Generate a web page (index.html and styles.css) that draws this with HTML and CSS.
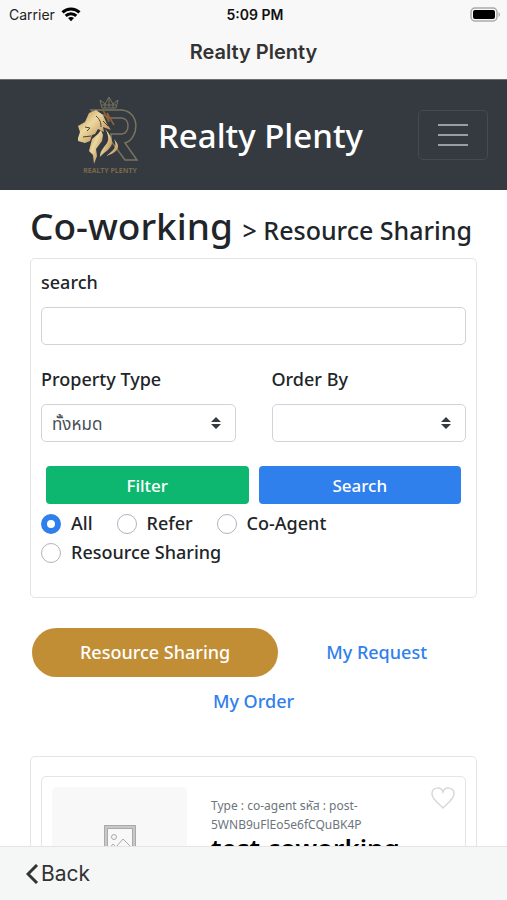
FILE: index.html
```html
<!DOCTYPE html>
<html lang="en">

<head>
    <meta charset="UTF-8">
    <meta name="viewport" content="width=device-width, initial-scale=1.0">
    <title>Realty Plenty</title>
    <link rel="stylesheet" href="styles.css">
</head>

<body>
    <header class="app-header">
        <div class="status-bar">
            <div class="carrier">
                <span>Carrier</span>
                <svg width="20" height="15" viewBox="0 0 20 15" fill="none" stroke="#000" stroke-width="3">
                    <path d="M1.5 5.4c4.8-4.6 12.2-4.6 17 0" />
                    <path d="M4.7 8.8c3-2.9 7.6-2.9 10.6 0" />
                    <path d="M10 14.2l-3-3.1c1.7-1.5 4.3-1.5 6 0z" fill="#000" stroke="none" />
                </svg>
            </div>
            <span class="clock">5:09 PM</span>
            <svg class="battery" width="31" height="15" viewBox="0 0 31 15">
                <rect x="1" y="1" width="26" height="13" rx="4" fill="#f8f8f8" stroke="#aaa" stroke-width="1.5" />
                <rect x="3" y="3" width="22" height="9" rx="2" fill="#000" />
                <path d="M28.5 5c2 1 2 4 0 5z" fill="#aaa" />
            </svg>
        </div>
        <div class="app-title">Realty Plenty</div>
    </header>

    <div class="page">
        <nav class="navbar">
            <a class="brand" href="#">
                <svg width="64" height="80" viewBox="0 0 64 80">
                    <defs>
                        <linearGradient id="gold" x1="0" y1="0" x2="1" y2="1">
                            <stop offset="0" stop-color="#b9894a" />
                            <stop offset=".4" stop-color="#ecd9a0" />
                            <stop offset="1" stop-color="#a8713a" />
                        </linearGradient>
                    </defs>
                    <g fill="none" stroke="#77745f">
                        <path d="M25 13l-2-8 5 4 4-7 4 7 5-4-2 8z" />
                        <path d="M25 10h14M32 3v9M28 9v4M36 9v4" />
                        <path d="M14 15h31c19 2 17 29 3 33l12 17H48L34 46V39h11c8-2 8-15 0-16H31l-4-3h-9z" stroke-width="1.5" />
                    </g>
                    <g fill="url(#gold)">
                        <path d="M1 43l2-6-2-6 7-4 4-9 7-3 7 5 4 9 4 6-8-3 1 5-6-3-3 5-3 1-2 6-5 2-7-2z" />
                        <path d="M15 44l6-5 3-4 2 5-1 6-6 8 1 7-3 8-1-9-4-4 2-8z" />
                        <path d="M28 34c5 8 4 13-1 18-3 4-4 6-4 10 4-5 10-7 12-13 1-5-3-11-7-15z" />
                        <path d="M37 44c4 8-1 12-8 17 8-2 15-7 11-13z" />
                    </g>
                    <path d="M8 32l5 1-3 3M19 21c4 3 5 7 5 11M6 42l8-1M26 26l5 5" fill="none" stroke="#4c4235" />
                    <path d="M26 15l6 12-2-9 7 12" fill="none" stroke="#8f6337" stroke-width="1.5" />
                    <text class="brand-caption" x="33" y="78" text-anchor="middle">REALTY PLENTY</text>
                </svg>
                <span>Realty Plenty</span>
            </a>
            <button class="menu-toggle" type="button" aria-label="Toggle navigation">
                <svg width="30" height="30" viewBox="0 0 30 30" stroke="#9b9da0" stroke-width="2">
                    <path d="M0 5h30M0 15h30M0 25h30" />
                </svg>
            </button>
        </nav>

        <main class="content">
            <h1>Co-working <small>&gt; Resource Sharing</small></h1>

            <form class="card search-card">
                <div class="field">
                    <label for="search">search</label>
                    <input class="control" type="text" id="search">
                </div>
                <div class="field-row">
                    <div class="field">
                        <label for="type">Property Type</label>
                        <div class="select-wrap">
                            <select class="control" id="type">
                                <option>ทั้งหมด</option>
                            </select>
                            <svg class="arrows" width="10" height="12" viewBox="0 0 10 12" fill="#343a40">
                                <path d="M5 0l5 5H0zM5 12L0 7h10z" />
                            </svg>
                        </div>
                    </div>
                    <div class="field">
                        <label for="order">Order By</label>
                        <div class="select-wrap">
                            <select class="control" id="order">
                                <option></option>
                            </select>
                            <svg class="arrows" width="10" height="12" viewBox="0 0 10 12" fill="#343a40">
                                <path d="M5 0l5 5H0zM5 12L0 7h10z" />
                            </svg>
                        </div>
                    </div>
                </div>
                <div class="buttons">
                    <button class="btn btn-filter" type="button">Filter</button>
                    <button class="btn btn-search" type="button">Search</button>
                </div>
                <div class="radios">
                    <label><input type="radio" name="kind" checked>All</label>
                    <label><input type="radio" name="kind">Refer</label>
                    <label><input type="radio" name="kind">Co-Agent</label>
                    <label><input type="radio" name="kind">Resource Sharing</label>
                </div>
            </form>

            <div class="tabs">
                <a class="tab active" href="#">Resource Sharing</a>
                <a class="tab" href="#">My Request</a>
                <a class="tab" href="#">My Order</a>
            </div>

            <section class="card list-card">
                <article class="card post">
                    <div class="thumb">
                        <svg width="32" height="32" viewBox="0 0 32 32" fill="none" stroke="#aaa">
                            <rect x="1.5" y="1.5" width="29" height="29" stroke="#c8c8c8" stroke-width="3" />
                            <rect x=".5" y=".5" width="31" height="31" />
                            <rect x="3.5" y="3.5" width="25" height="25" fill="#f8f8f8" />
                            <circle cx="10" cy="12" r="2.5" />
                            <path d="M4 25l5-6 3 3 7-8 9 9" />
                        </svg>
                    </div>
                    <div class="post-body">
                        <p>Type : co-agent รหัส : post-5WNB9uFlEo5e6fCQuBK4P</p>
                        <h2>test coworking</h2>
                    </div>
                    <button class="like" type="button" aria-label="Like">
                        <svg width="24" height="22" viewBox="0 0 24 22" fill="none" stroke="#d8d8d8" stroke-width="1.5">
                            <path d="M12 21C8 17 1 12 1 7c0-7 9-8 11-2 2-6 11-5 11 2 0 5-7 10-11 14z" />
                        </svg>
                    </button>
                </article>
            </section>
        </main>
    </div>

    <footer class="bottom-bar">
        <button class="back" type="button">
            <svg width="13" height="20" viewBox="0 0 13 20" fill="none" stroke="#333" stroke-width="3">
                <path d="M11 1L2 10l9 9" />
            </svg>
            Back
        </button>
    </footer>
</body>

</html>
```
FILE: styles.css
```css
* {
    box-sizing: border-box;
}

body {
    margin: 0;
    height: 100vh;
    display: flex;
    flex-direction: column;
    font-family: "Noto Sans", "Noto Sans Thai", sans-serif;
    font-size: 18px;
    line-height: 29px;
    color: #212529;
    background: #fff;
}

button,
input,
select {
    font: inherit;
}

a {
    text-decoration: none;
}

.app-header {
    background: #f8f8f8;
    border-bottom: 1px solid #6d6e70;
    font-family: Inter, sans-serif;
}

.status-bar {
    display: grid;
    grid-template-columns: 1fr auto 1fr;
    align-items: center;
    height: 26px;
    padding: 0 6px 0 9px;
    font-size: 14px;
    color: #222;
}

.carrier {
    display: flex;
    align-items: center;
    gap: 6px;
}

.clock {
    font-weight: 600;
    color: #111;
}

.battery {
    justify-self: end;
}

.app-title {
    height: 53px;
    line-height: 53px;
    text-align: center;
    font-size: 20px;
    font-weight: 600;
    color: #333;
}

.page {
    flex: 1;
    min-height: 0;
    overflow-y: auto;
    scrollbar-width: none;
}

.navbar {
    display: flex;
    align-items: center;
    justify-content: space-between;
    height: 110px;
    padding: 0 19px 0 77px;
    background: #343a40;
}

.brand {
    display: flex;
    align-items: center;
    gap: 17px;
    color: #fff;
    font-size: 33px;
    font-weight: 500;
}

.brand-caption {
    font-size: 7px;
    font-weight: 700;
    fill: #77694b;
}

.menu-toggle {
    display: flex;
    padding: 9px 19px;
    border: 1px solid #464b51;
    border-radius: 5px;
    background: none;
}

.content {
    padding: 12px 30px;
}

h1 {
    margin: 0 0 8px;
    font-size: 37px;
    font-weight: 500;
    line-height: 48px;
}

h1 small {
    font-size: 25px;
    line-height: 29px;
}

.card {
    border: 1px solid #e4e4e4;
    border-radius: 5px;
}

.search-card {
    padding: 9px 10px 30px;
    font-weight: 500;
}

.field > label {
    display: block;
    margin-bottom: 10px;
}

.control {
    display: block;
    width: 100%;
    height: 38px;
    padding: 0 10px;
    border: 1px solid #ced4da;
    border-radius: 5px;
    background: #fff;
    color: #495057;
    font-size: 17px;
    font-weight: 400;
    appearance: none;
}

.field-row {
    display: grid;
    grid-template-columns: 1fr 1fr;
    gap: 36px;
    margin-top: 20px;
}

.select-wrap {
    position: relative;
}

.arrows {
    position: absolute;
    right: 15px;
    top: 13px;
    pointer-events: none;
}

.buttons {
    display: grid;
    grid-template-columns: 1fr 1fr;
    gap: 10px;
    margin: 24px 5px 5px;
}

.btn {
    height: 38px;
    border: none;
    border-radius: 4px;
    color: #fff;
    font-size: 17px;
    font-weight: 500;
}

.btn-filter {
    background: #0eb770;
}

.btn-search {
    background: #2f80ed;
}

.radios {
    display: flex;
    flex-wrap: wrap;
    column-gap: 24px;
}

.radios label {
    display: flex;
    align-items: center;
    gap: 10px;
}

.radios input {
    width: 20px;
    height: 20px;
    margin: 0;
    border: 1px solid #adb5bd;
    border-radius: 50%;
    background: #fff;
    appearance: none;
}

.radios input:checked {
    border: 6px solid #2f80ed;
}

.tabs {
    display: flex;
    flex-wrap: wrap;
    justify-content: center;
    margin: 30px 0;
}

.tab {
    padding: 10px 48px;
    border-radius: 25px;
    color: #2f80ed;
    font-weight: 500;
}

.tab.active {
    background: #c18e36;
    color: #fff;
}

.list-card {
    padding: 19px 10px;
}

.post {
    display: flex;
    align-items: flex-start;
    padding: 10px;
}

.thumb {
    display: flex;
    align-items: center;
    justify-content: center;
    flex: 0 0 135px;
    height: 108px;
    border-radius: 5px;
    background: #f8f8f8;
}

.post-body {
    flex: 1;
    min-width: 0;
    padding: 9px 20px 0 24px;
}

.post p {
    margin: 0;
    color: #6c757d;
    font-size: 12px;
    line-height: 19px;
}

.post h2 {
    margin: 0;
    color: #000;
    font-size: 26px;
    font-weight: 600;
    line-height: 29px;
    white-space: nowrap;
}

.like {
    display: flex;
    padding: 0;
    border: none;
    background: none;
}

.bottom-bar {
    height: 54px;
    padding: 0 26px;
    display: flex;
    align-items: center;
    border-top: 1px solid #e4e5e5;
    background: #f5f6f6;
}

.back {
    display: flex;
    align-items: center;
    gap: 2px;
    padding: 0;
    border: none;
    background: none;
    color: #333;
    font-family: Inter, sans-serif;
    font-size: 21px;
}
```
